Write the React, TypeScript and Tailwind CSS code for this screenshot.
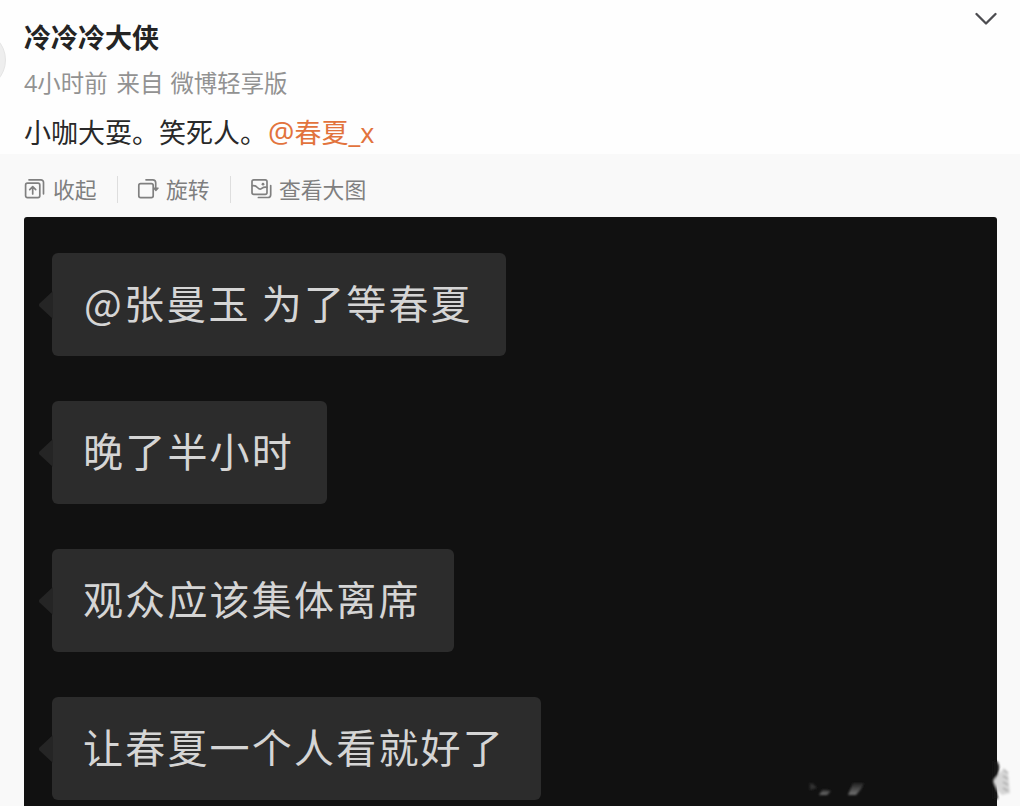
import type { ReactNode } from "react";

const messages = [
  { text: "@张曼玉 为了等春夏", box: "w-[454px] indent-px" },
  { text: "晚了半小时", box: "w-[275px]" },
  { text: "观众应该集体离席", box: "w-[402px]" },
  { text: "让春夏一个人看就好了", box: "w-[489px]" },
];

function Icon({ children }: { children: ReactNode }) {
  return (
    <svg
      className="relative -top-px h-[22px] w-[22px] shrink-0"
      viewBox="0 0 22 22"
      fill="none"
      stroke="#808080"
      strokeWidth="1.7"
      strokeLinecap="round"
      strokeLinejoin="round"
    >
      {children}
    </svg>
  );
}

function CollapseIcon() {
  return (
    <Icon>
      <rect x="1.6" y="5.2" width="14.2" height="14.4" rx="1.8" />
      <path d="M5 1.8h12a2.5 2.5 0 0 1 2.5 2.5v11.5" />
      <path d="M8.7 16V9M5.7 11.7l3-3 3 3" />
    </Icon>
  );
}

function RotateIcon() {
  return (
    <Icon>
      <rect x="1.8" y="5.6" width="14.4" height="14" rx="1.8" />
      <path d="M9 1.8h6.7a3 3 0 0 1 3 3v6" />
      <path d="M16.6 10h4.600l-2.300 2.500z" fill="#808080" strokeWidth="1.2" />
    </Icon>
  );
}

function PictureIcon() {
  return (
    <Icon>
      <rect x="2" y="1.8" width="15" height="14.6" rx="1.8" />
      <path d="M2.400 7.800c2.600-.6 3.500.2 5 1.700s3.200 2.200 4.800.7 2.700-1.300 4.700-.9" />
      <circle cx="13" cy="6.200" r="1.400" fill="#808080" stroke="none" />
      <path d="M20.700 7.500v9.200a2.800 2.800 0 0 1-2.800 2.800H8.400" />
    </Icon>
  );
}

function Bubble({ text, box }: (typeof messages)[number]) {
  return (
    <div className={`relative flex h-[103px] items-center rounded-[6px] bg-[#2c2c2c] pb-[6px] pl-[31px] ${box}`}>
      <svg className="absolute top-[37px] -left-[14px] h-[30px] w-[15px]" viewBox="0 0 15 30">
        <path d="M15 1 1.500 13.500Q0 15 1.500 16.500L15 29z" fill="#252525" />
      </svg>
      <span className="font-[family-name:'Noto_Sans_CJK_SC',sans-serif] text-[40px] leading-none tracking-[2.2px] whitespace-pre text-[#d5d5d5]">
        {text}
      </span>
    </div>
  );
}

export default function App() {
  return (
    <div className="relative h-[806px] w-[1020px] overflow-hidden bg-[#f9f9f9] font-[family-name:'Open_Sans','Noto_Sans_CJK_SC',sans-serif]">
      <div className="absolute top-[30px] -left-[54px] z-10 h-[60px] w-[60px] rounded-full border border-[#e5e5e5] bg-[#eeeeee]" />

      <header className="flex h-[154px] justify-between bg-[#fefefe] pl-6 whitespace-nowrap">
        <div>
          <h1 className="mt-[18px] text-[27px] leading-[40px] font-bold text-[#242424]">冷冷冷大侠</h1>
          <p className="mt-[8px] text-[23.400px] leading-[34px] text-[#929292]">
            <span className="mr-[3px]">4小时前</span> 来自 <span className="ml-px">微博轻享版</span>
          </p>
          <p className="mt-[13px] text-[27px] leading-[40px] text-[#292929]">
            小咖大耍。笑死人。
            <span className="ml-px text-[#e2733d]">
              <span className="text-[29.500px] leading-none">@</span>春夏_x
            </span>
          </p>
        </div>
        <svg className="mt-[11px] mr-[23px] h-4 w-[22px]" viewBox="0 0 22 16" fill="none" stroke="#4c4c50" strokeWidth="2.300" strokeLinecap="round" strokeLinejoin="round">
          <path d="m1.500 3 9.500 9.500L20.500 3" />
        </svg>
      </header>

      <nav className="flex h-[63px] items-center pt-[8px] pl-6 text-[21.800px] leading-8 whitespace-nowrap text-[#7f7f7f]">
        <div className="flex w-[93px] items-center gap-[7px]">
          <CollapseIcon />
          <span>收起</span>
        </div>
        <div className="flex h-[27px] w-[113px] items-center gap-[7px] border-l border-[#dedede] pl-[19px]">
          <RotateIcon />
          <span>旋转</span>
        </div>
        <div className="flex h-[27px] items-center gap-[7px] border-l border-[#dedede] pl-[19px]">
          <PictureIcon />
          <span>查看大图</span>
        </div>
      </nav>

      <main className="ml-6 flex h-[589px] w-[973px] flex-col gap-[45px] rounded-t-[3px] bg-[#111111] pt-[36px] pl-[28px]">
        {messages.map((message) => (
          <Bubble key={message.text} {...message} />
        ))}
      </main>

      {/* faded watermark over the corner of the photo */}
      <svg className="absolute right-0 bottom-0 h-[50px] w-[220px]" viewBox="0 0 220 50">
        <defs>
          <linearGradient id="smudge" x1="0" y1="0" x2="0" y2="1">
            <stop offset="0" stopColor="#222222" />
            <stop offset="1" stopColor="#737373" />
          </linearGradient>
          <filter id="soft">
            <feGaussianBlur stdDeviation="0.8" />
          </filter>
        </defs>
        <g filter="url(#soft)">
          <path d="m10 27 3 1 4 4-7 2z" fill="#333333" />
          <path d="m19 39 4-6 8 2-4 4z" fill="url(#smudge)" />
          <path d="m48 39 5-12h11l-3 6-5 6z" fill="url(#smudge)" />
          <path d="M196 5q5 2 2 14l-5 6 4 10 1 8h-5V5z" fill="#151515" />
          <path d="m193 25 5-6 6-7 4 5 2 20-8 2-4-4z" fill="#d6d6d6" />
          <path d="m204 14 4 3M203 20l5 3M203 26l5 3M203 32l5 3" stroke="#aaaaaa" strokeWidth="1.500" />
        </g>
      </svg>
    </div>
  );
}
